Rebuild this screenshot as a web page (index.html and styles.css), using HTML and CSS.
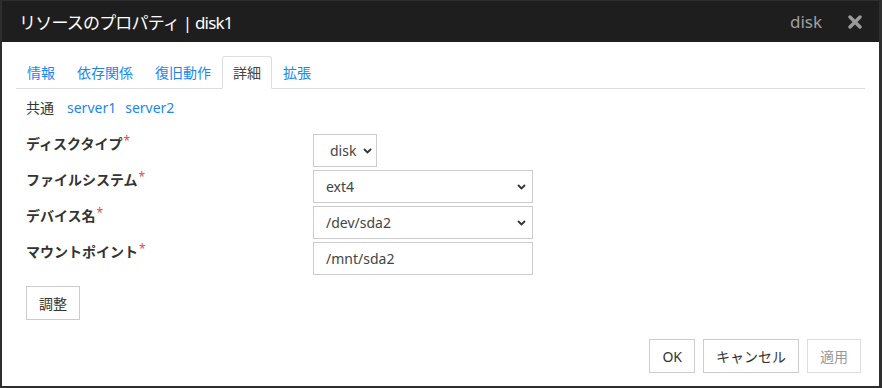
FILE: index.html
```html
<!DOCTYPE html>
<html lang="ja">
<head>
<meta charset="utf-8">
<title>リソースのプロパティ</title>
<link rel="stylesheet" href="styles.css">
</head>
<body>
<div class="dialog">
  <div class="header">
    <div class="title">リソースのプロパティ | disk1</div>
    <div class="type">disk</div>
    <div class="close">
      <svg width="14" height="14" viewBox="0 0 14 14"><path d="M2 2 L12 12 M12 2 L2 12" stroke="#9a9a9a" stroke-width="3.4" stroke-linecap="round"/></svg>
    </div>
  </div>
  <div class="body">
    <ul class="tabs">
      <li class="tab">情報</li>
      <li class="tab">依存関係</li>
      <li class="tab">復旧動作</li>
      <li class="tab active">詳細</li>
      <li class="tab">拡張</li>
    </ul>
    <div class="servers">
      <span class="common">共通</span>
      <span class="link">server1</span>
      <span class="link">server2</span>
    </div>
    <div class="form">
      <div class="row">
        <div class="label">ディスクタイプ<span class="req">*</span></div>
        <div class="field select small"><span>disk</span><svg class="chev" width="9" height="6" viewBox="0 0 9 6"><path d="M1 1 L4.5 4.5 L8 1" fill="none" stroke="#333" stroke-width="1.8"/></svg></div>
      </div>
      <div class="row">
        <div class="label">ファイルシステム<span class="req">*</span></div>
        <div class="field select"><span>ext4</span><svg class="chev" width="9" height="6" viewBox="0 0 9 6"><path d="M1 1 L4.5 4.5 L8 1" fill="none" stroke="#333" stroke-width="1.8"/></svg></div>
      </div>
      <div class="row">
        <div class="label">デバイス名<span class="req">*</span></div>
        <div class="field select"><span>/dev/sda2</span><svg class="chev" width="9" height="6" viewBox="0 0 9 6"><path d="M1 1 L4.5 4.5 L8 1" fill="none" stroke="#333" stroke-width="1.8"/></svg></div>
      </div>
      <div class="row">
        <div class="label">マウントポイント<span class="req">*</span></div>
        <div class="field"><span>/mnt/sda2</span></div>
      </div>
    </div>
    <button class="btn adjust">調整</button>
  </div>
  <div class="footer">
    <button class="btn">OK</button>
    <button class="btn">キャンセル</button>
    <button class="btn disabled">適用</button>
  </div>
</div>
</body>
</html>
```
FILE: styles.css
```css
html, body {
  margin: 0;
  padding: 0;
}
body {
  background: #2e2e2e;
  width: 882px;
  height: 388px;
  overflow: hidden;
  font-family: "Noto Sans", "Noto Sans CJK JP", sans-serif;
  font-size: 14px;
  color: #333;
}
.dialog {
  margin: 1px 0 0 2px;
  width: 877px;
  height: 385px;
  background: #fff;
  display: flex;
  flex-direction: column;
}
.header {
  height: 41px;
  background: #1e1e1e;
  display: flex;
  align-items: center;
  padding: 0 17px;
}
.title {
  color: #fff;
  font-size: 17px;
  flex: 1;
  letter-spacing: -0.8px;
}
.type {
  color: #a0a0a0;
  font-size: 17px;
  margin-right: 26px;
}
.close {
  display: flex;
  align-items: center;
}
.body {
  padding: 14px 14px 0 14px;
}
.tabs {
  list-style: none;
  margin: 0;
  padding: 0;
  display: flex;
  border-bottom: 1px solid #ddd;
}
.tab {
  padding: 7px 10px 6px;
  line-height: 18px;
  border: 1px solid transparent;
  border-radius: 3px 3px 0 0;
  margin-bottom: -1px;
  color: #1a87f0;
}
.tab.active {
  color: #444;
  border-color: #ddd;
  border-bottom-color: #fff;
  background: #fff;
}
.servers {
  padding: 10px 0 0 10px;
  line-height: 18px;
  display: flex;
  gap: 9px;
}
.common {
  color: #333;
  margin-right: 4px;
}
.link {
  color: #1a87f0;
}
.form {
  margin-top: 17px;
  padding-left: 10px;
}
.row {
  display: flex;
  margin-bottom: 3px;
}
.label {
  width: 287px;
  font-weight: bold;
  line-height: 20px;
  color: #333;
}
.req {
  color: #e8474c;
  font-size: 12px;
  vertical-align: top;
  position: relative;
  top: -3px;
  margin-left: 1px;
  font-weight: normal;
}
.field {
  position: relative;
  box-sizing: border-box;
  width: 220px;
  height: 33px;
  border: 1px solid #ccc;
  padding: 0 12px;
  display: flex;
  align-items: center;
  color: #444;
}
.field.small {
  width: 64px;
  padding-left: 16px;
}
.chev {
  position: absolute;
  right: 6px;
  top: 13px;
}
.field.small .chev {
  right: 4px;
}
.btn {
  font-family: "Noto Sans", "Noto Sans CJK JP", sans-serif;
  font-size: 14px;
  color: #333;
  background: #fff;
  border: 1px solid #ccc;
  height: 34px;
  padding: 0 12px;
  margin: 0;
}
.adjust {
  margin: 8px 0 0 10px;
}
.footer {
  display: flex;
  justify-content: flex-end;
  gap: 8px;
  padding: 19px 18px 0 0;
}
.btn.disabled {
  color: #999;
  border-color: #ddd;
}
```
